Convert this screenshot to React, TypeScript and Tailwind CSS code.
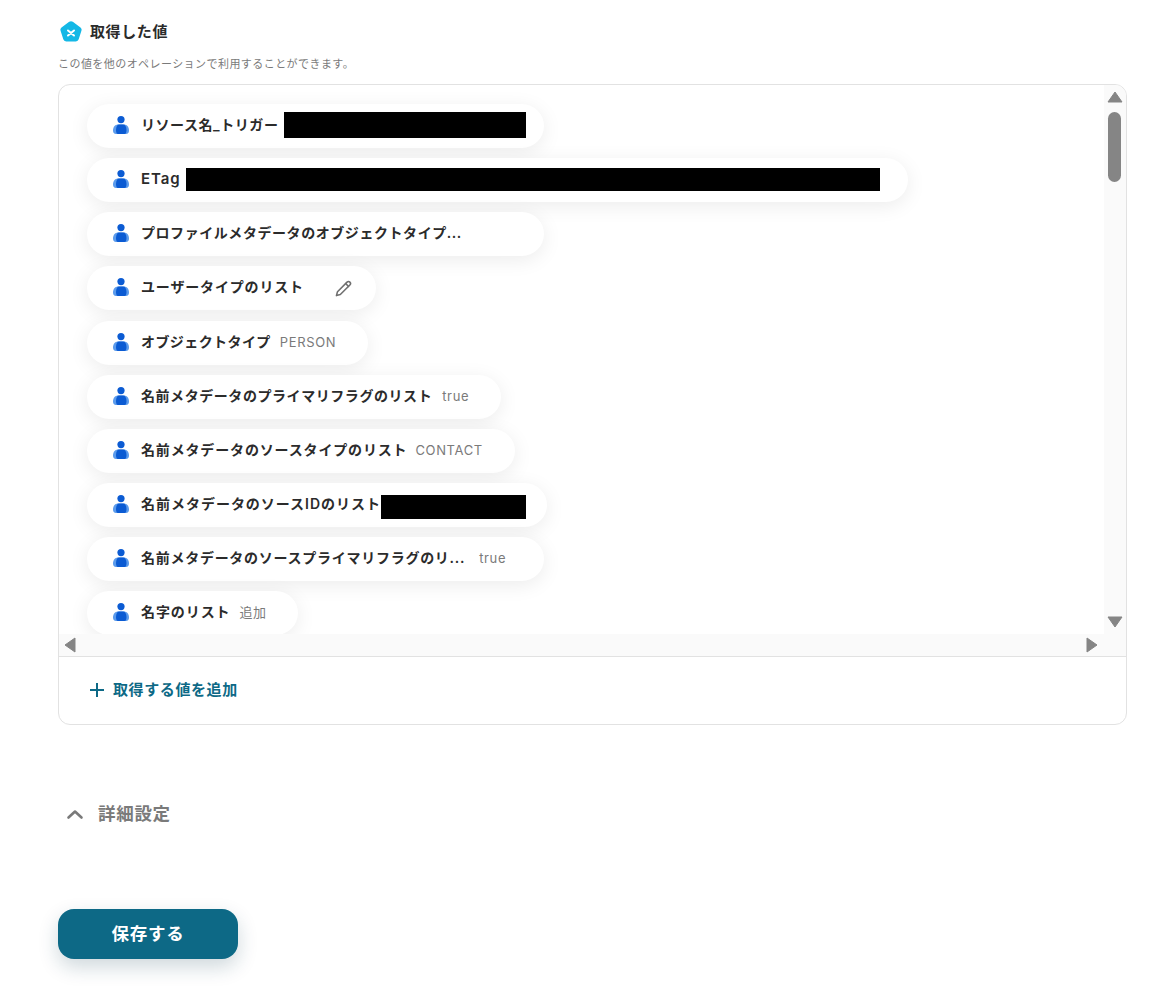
const font = { fontFamily: 'Inter, "Noto Sans CJK JP", "Noto Sans", sans-serif' }

function PersonIcon() {
  return (
    <svg width="16" height="20" viewBox="0 0 16 20" className="mb-[2px] shrink-0">
      <circle cx="8" cy="4.600" r="3.600" fill="#0b5bd3" />
      <path d="M0 15.500C0 11.500 2.500 9.500 5 9.500h6c2.500 0 5 2 5 6 0 2-1 3.500-3 3.500H3c-2 0-3-1.500-3-3.500z" fill="#5b9bec" />
      <path d="M3 15C3 11.500 4.500 9.500 6 9.500h4c2 0 3.500 2 3.500 5.500 0 2-.5 4-2 4H5c-1.500 0-2-2-2-4z" fill="#0b5bd3" />
    </svg>
  )
}

function Pill({
  width,
  label,
  labelClass = "text-[14px] tracking-[0.04em]",
  children,
}: {
  width: string
  label: string
  labelClass?: string
  children?: React.ReactNode
}) {
  return (
    <div className={`flex h-11 shrink-0 items-center rounded-full bg-white pl-[26px] shadow-[0_4px_20px_rgba(0,0,0,0.08)] ${width}`}>
      <PersonIcon />
      <span className={`mb-[2px] ml-3 leading-5 font-semibold whitespace-nowrap text-[#2b2b2b] ${labelClass}`}>{label}</span>
      {children}
    </div>
  )
}

function Mask({ className }: { className: string }) {
  return <div className={`mb-[2px] bg-black ${className}`} />
}

function Value({ className, children }: { className: string; children: React.ReactNode }) {
  return <span className={`mb-[2px] text-[13px] leading-5 tracking-[0.05em] whitespace-nowrap text-[#7a7a7a] ${className}`}>{children}</span>
}

export default function App() {
  return (
    <div className="h-[987px] w-[1171px] overflow-hidden bg-white pt-[20px] pl-[58px]" style={font}>
      <div className="flex h-6 items-center">
        <svg width="24" height="24" viewBox="0 0 24 24" className="ml-[1px]">
          <path d="M10.200 1.800a3 3 0 0 1 3.600 0l7.700 5.600a2.800 2.800 0 0 1 1 3.200l-2.800 8.700a3 3 0 0 1-2.900 2.100H7.200a3 3 0 0 1-2.900-2.100L1.500 10.600a2.800 2.800 0 0 1 1-3.200z" fill="#14b8e6" />
          <path d="M9 10.500l6 5M15 10.500l-6 5" fill="none" stroke="#fff" strokeWidth="2" strokeLinecap="round" />
        </svg>
        <h2 className="ml-[7px] text-[15px] leading-6 font-semibold tracking-[0.04em] text-[#2b2b2b]">取得した値</h2>
      </div>
      <p className="mt-[12px] text-[11px] leading-4 tracking-[0.04em] text-[#7a7a7a]">この値を他のオペレーションで利用することができます。</p>

      <div className="mt-[12px] h-[641px] w-[1069px] overflow-hidden rounded-xl border border-[#e2e2e2]">
        <div className="flex h-[549px]">
          <div className="flex w-[1045px] flex-col gap-[10.150px] overflow-hidden pt-[19px] pl-[28px]">
            <Pill width="w-[457px]" label="リソース名_トリガー">
              <Mask className="ml-[6px] h-[26px] w-[242px]" />
            </Pill>
            <Pill width="w-[821px]" label="ETag" labelClass="text-[15px] tracking-[0.06em]">
              <Mask className="ml-[6px] h-[23px] w-[694px]" />
            </Pill>
            <Pill width="w-[457px]" label="プロファイルメタデータのオブジェクトタイプ..." />
            <Pill width="w-[289px]" label="ユーザータイプのリスト" labelClass="text-[14px] tracking-[0.06em]">
              <svg width="17" height="17" viewBox="0 0 24 24" fill="none" stroke="#6f6f6f" strokeWidth="2.200" strokeLinecap="round" strokeLinejoin="round" className="ml-[31px]">
                <path d="M17 3a2.800 2.800 0 0 1 4 4L7.500 20.500 2 22l1.500-5.500z" />
                <path d="M15 5l4 4" />
              </svg>
            </Pill>
            <Pill width="w-[281px]" label="オブジェクトタイプ" labelClass="text-[14px] tracking-[0.03em]">
              <Value className="ml-[9px]">PERSON</Value>
            </Pill>
            <Pill width="w-[414px]" label="名前メタデータのプライマリフラグのリスト">
              <Value className="ml-[10px]">true</Value>
            </Pill>
            <Pill width="w-[428px]" label="名前メタデータのソースタイプのリスト" labelClass="text-[14px] tracking-[0.06em]">
              <Value className="ml-[8px]">CONTACT</Value>
            </Pill>
            <Pill width="w-[460px]" label="名前メタデータのソースIDのリスト" labelClass="text-[14px] tracking-[0.07em]">
              <Mask className="mt-[6px] h-[24px] w-[145px]" />
            </Pill>
            <Pill width="w-[457px]" label="名前メタデータのソースプライマリフラグのリ..." labelClass="text-[14px] tracking-[0.052em]">
              <Value className="ml-[14px]">true</Value>
            </Pill>
            <Pill width="w-[211px]" label="名字のリスト" labelClass="text-[14px] tracking-[0.065em]">
              <Value className="ml-[9px]">追加</Value>
            </Pill>
          </div>
          <div className="relative w-[22px] bg-[#fafafa]">
            <svg width="16" height="12" viewBox="0 0 16 12" className="absolute top-[6px] left-[3px]">
              <path d="M8 1l7 10H1z" fill="#858585" stroke="#858585" strokeLinejoin="round" />
            </svg>
            <div className="absolute top-[27px] left-[4px] h-[70px] w-[13px] rounded-full bg-[#858585]" />
            <svg width="16" height="12" viewBox="0 0 16 12" className="absolute top-[531px] left-[3px]">
              <path d="M8 11L1 1h14z" fill="#858585" stroke="#858585" strokeLinejoin="round" />
            </svg>
          </div>
        </div>
        <div className="relative h-[23px] border-b border-[#e2e2e2] bg-[#fafafa]">
          <svg width="12" height="16" viewBox="0 0 12 16" className="absolute top-[3px] left-[5px]">
            <path d="M1 8l10-7v14z" fill="#858585" stroke="#858585" strokeLinejoin="round" />
          </svg>
          <svg width="12" height="16" viewBox="0 0 12 16" className="absolute top-[3px] left-[1027px]">
            <path d="M11 8L1 1v14z" fill="#858585" stroke="#858585" strokeLinejoin="round" />
          </svg>
        </div>
        <button className="mt-[21px] ml-[30px] flex h-6 items-center text-[15px] font-semibold tracking-[0.04em] text-[#0d6986]">
          <svg width="16" height="16" viewBox="0 0 16 16" className="mr-[8px]" stroke="#0d6986" strokeWidth="2">
            <path d="M8 1v14M1 8h14" />
          </svg>
          取得する値を追加
        </button>
      </div>

      <div className="mt-[77px] flex h-6 items-center">
        <svg width="18" height="12" viewBox="0 0 18 12" fill="none" stroke="#7a7a7a" strokeWidth="2.600" strokeLinecap="round" strokeLinejoin="round" className="ml-[8px]">
          <path d="M2.500 9.500L9 3.500l6.500 6" />
        </svg>
        <span className="ml-[14px] text-[17.500px] font-semibold tracking-[0.04em] text-[#7a7a7a]">詳細設定</span>
      </div>

      <button className="mt-[83px] h-[50px] w-[180px] rounded-2xl bg-[#0d6986] text-[17.500px] font-semibold tracking-[0.04em] text-white shadow-[0_8px_20px_rgba(13,60,80,0.2)]">
        保存する
      </button>
    </div>
  )
}
